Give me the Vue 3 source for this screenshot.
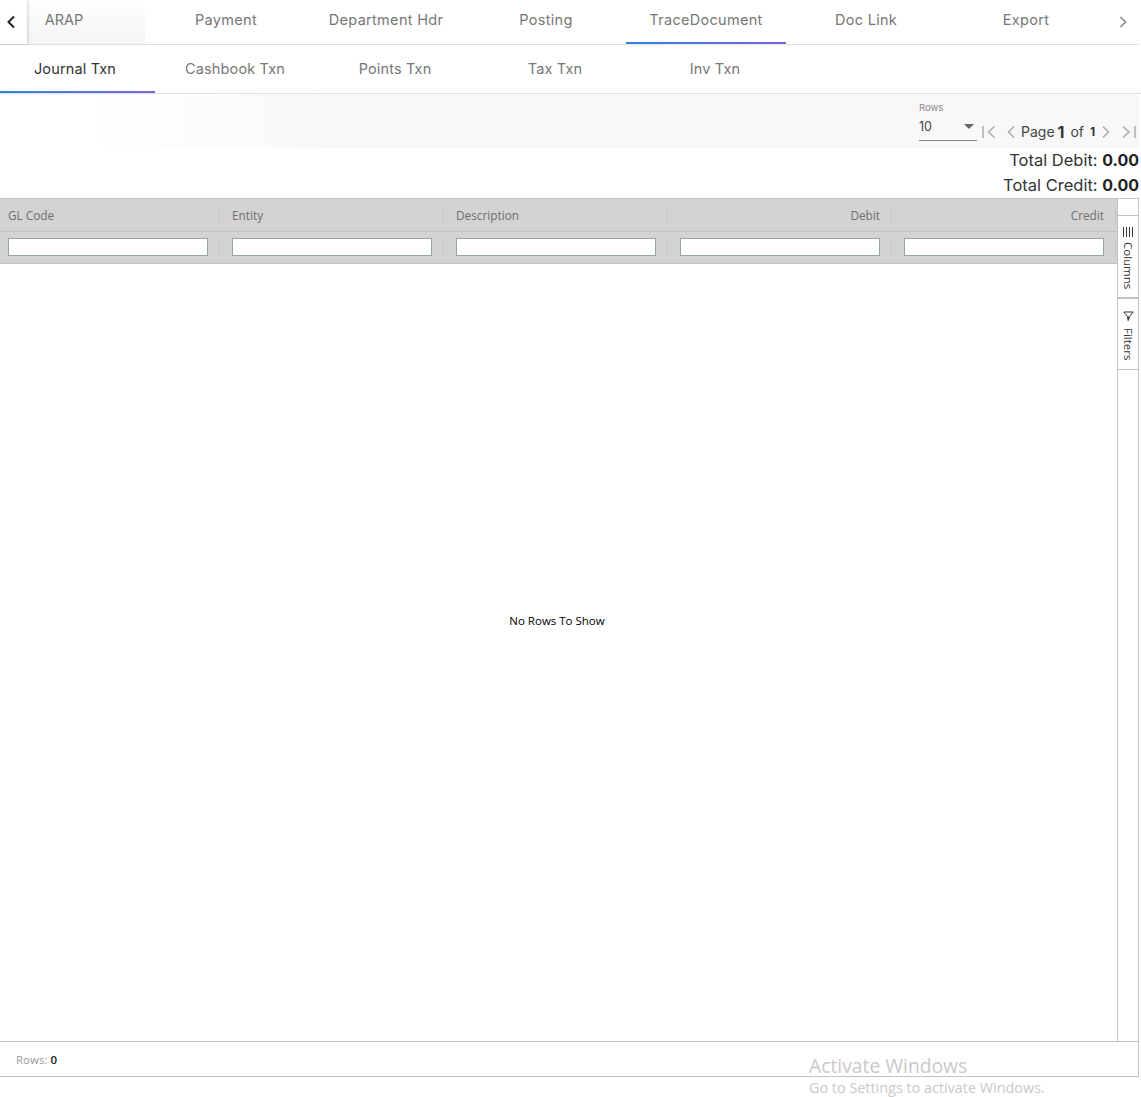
<template>
  <div class="page">
    <div class="top-tabs">
      <button class="arrow arrow-left">
        <svg width="10" height="14" viewBox="0 0 10 14"><path d="M8 1.5 2.500 7 8 12.500" fill="none" stroke="#222" stroke-width="2" /></svg>
      </button>
      <div class="top-scroll">
        <div v-for="t in topTabs" :key="t" class="top-tab" :class="{ active: t == 'TraceDocument', first: t == 'ARAP' }">{{ t }}</div>
      </div>
      <button class="arrow arrow-right">
        <svg width="10" height="14" viewBox="0 0 10 14"><path d="M2.500 2 7.500 7 2.500 12" fill="none" stroke="#888" stroke-width="1.600" /></svg>
      </button>
    </div>

    <div class="sub-tabs">
      <div v-for="t in subTabs" :key="t" class="sub-tab" :class="{ active: t == 'Journal Txn' }">{{ t }}</div>
    </div>

    <div class="toolbar">
      <div class="rows-select">
        <label>Rows</label>
        <div class="select-value">
          <span>10</span>
          <i class="caret"></i>
        </div>
      </div>
      <div class="pager">
        <svg width="16" height="14" viewBox="0 0 16 14"><path d="M2 1v12M13.500 1.500 7.500 7l6 5.500" fill="none" stroke="#aaa" stroke-width="1.500" /></svg>
        <svg class="prev" width="10" height="14" viewBox="0 0 10 14"><path d="M8 1.500 2.500 7 8 12.500" fill="none" stroke="#aaa" stroke-width="1.500" /></svg>
        <span class="page-text">Page</span>
        <b class="page-num">1</b>
        <span class="of">of</span>
        <b class="page-total">1</b>
        <svg class="next" width="10" height="14" viewBox="0 0 10 14"><path d="M2 1.500 7.500 7 2 12.500" fill="none" stroke="#aaa" stroke-width="1.500" /></svg>
        <svg class="last" width="16" height="14" viewBox="0 0 16 14"><path d="M2 1.500 8 7l-6 5.500M14 1v12" fill="none" stroke="#aaa" stroke-width="1.500" /></svg>
      </div>
    </div>

    <div class="totals">
      <div>Total Debit: <b>0.00</b></div>
      <div>Total Credit: <b>0.00</b></div>
    </div>

    <div class="grid">
      <div class="grid-body">
        <div class="grid-main">
          <div class="head-row">
            <div v-for="c in columns" :key="c.name" class="head-cell" :class="{ right: c.right }">{{ c.name }}</div>
          </div>
          <div class="filter-row">
            <div v-for="c in columns" :key="c.name" class="filter-cell">
              <input type="text">
            </div>
          </div>
          <div class="empty">
            <span>No Rows To Show</span>
          </div>
        </div>
        <div class="side">
          <div class="side-top"></div>
          <div class="side-btn columns">
            <svg width="10" height="10" viewBox="0 0 10 10"><path d="M.5 0v10M3.500 0v10M6.500 0v10M9.500 0v10" stroke="#333" stroke-width="1" /></svg>
            <span>Columns</span>
          </div>
          <div class="side-btn filters">
            <svg width="11" height="11" viewBox="0 0 11 11">
              <path d="M.8 1h9.400L6.500 5.500 5.200 9.500 4.500 5.500z" fill="none" stroke="#333" stroke-width="1" />
              <path d="M4.500 5.500h2L5 10z" fill="#333" />
            </svg>
            <span>Filters</span>
          </div>
        </div>
      </div>
      <div class="status">Rows: <b>0</b></div>
    </div>

    <div class="watermark">
      <div class="wm-title">Activate Windows</div>
      <div class="wm-sub">Go to Settings to activate Windows.</div>
    </div>
  </div>
</template>

<script setup>
const topTabs = ['ARAP', 'Payment', 'Department Hdr', 'Posting', 'TraceDocument', 'Doc Link', 'Export']
const subTabs = ['Journal Txn', 'Cashbook Txn', 'Points Txn', 'Tax Txn', 'Inv Txn']
const columns = [
  { name: 'GL Code' },
  { name: 'Entity' },
  { name: 'Description' },
  { name: 'Debit', right: true },
  { name: 'Credit', right: true }
]
</script>

<style scoped>
.page {
  position: relative;
  width: 1141px;
  height: 1097px;
  background: #fff;
  font-family: "Inter", "Open Sans", sans-serif;
  overflow: hidden;
}

.top-tabs {
  display: flex;
  width: 1139px;
  height: 45px;
  border-bottom: 1px solid #e0e0e0;
  box-sizing: border-box;
}

.arrow {
  border: 0;
  background: #fff;
  padding: 0;
  display: flex;
  align-items: center;
  justify-content: center;
  flex: none;
}

.arrow-left {
  width: 27px;
  padding-right: 5px;
  position: relative;
  z-index: 1;
  box-shadow: 1px 0 3px #0000002e;
}

.arrow-right {
  width: 36px;
  padding-left: 4px;
  margin-left: auto;
}

.top-scroll {
  display: flex;
  flex: 1;
  overflow: hidden;
}

.top-tab {
  flex: none;
  width: 160px;
  height: 44px;
  line-height: 40px;
  text-align: center;
  font-size: 14.500px;
  letter-spacing: .3px;
  color: #777;
  box-sizing: border-box;
}

.top-tab.first {
  width: 118px;
  margin-right: 1px;
  padding-right: 44px;
  letter-spacing: 0;
  background: linear-gradient(#fff, #f4f4f7);
}

.top-tab.active {
  border-bottom: 2px solid;
  border-image: linear-gradient(90deg, #2f86d8, #7a63e0) 1;
}

.sub-tabs {
  display: flex;
  height: 49px;
  border-bottom: 1px solid #e0e0e0;
  box-sizing: border-box;
}

.sub-tab {
  width: 160px;
  height: 48px;
  line-height: 48px;
  text-align: center;
  font-size: 14.500px;
  letter-spacing: .15px;
  color: #777;
  box-sizing: border-box;
}

.sub-tab.active {
  width: 155px;
  padding-right: 5px;
  color: #333;
  border-bottom: 2px solid;
  border-image: linear-gradient(90deg, #2f86d8, #7a63e0) 1;
}

.toolbar {
  display: flex;
  justify-content: flex-end;
  align-items: flex-end;
  width: 1139px;
  height: 54px;
  background: linear-gradient(90deg, #fff 8%, #f8f8f8 30%);
  box-sizing: border-box;
}

.rows-select {
  width: 58px;
  margin-bottom: 7px;
}

.rows-select label {
  display: block;
  font-size: 9.500px;
  color: #888;
  line-height: 12px;
  margin-bottom: 6px;
}

.select-value {
  display: flex;
  align-items: center;
  justify-content: space-between;
  height: 21px;
  border-bottom: 1px solid #888;
  font-size: 12.500px;
  color: #444;
  padding-right: 3px;
  padding-bottom: 7px;
  box-sizing: border-box;
}

.caret {
  border-left: 5px solid transparent;
  border-right: 5px solid transparent;
  border-top: 5px solid #666;
}

.pager {
  display: flex;
  align-items: center;
  height: 32px;
  width: 162px;
  padding-left: 4px;
  padding-bottom: 1px;
  box-sizing: border-box;
  font-size: 14px;
  color: #444;
}

.prev {
  margin-left: 9px;
}

.page-text {
  margin-left: 5px;
}

.page-num {
  margin-left: 3px;
  font-size: 16px;
  color: #333;
}

.of {
  margin-left: 6px;
}

.page-total {
  margin-left: 6px;
  color: #333;
  font-size: 12px;
}

.next {
  margin-left: 6px;
}

.last {
  margin-left: 10px;
}

.totals {
  width: 1139px;
  height: 50px;
  text-align: right;
  font-size: 16.500px;
  line-height: 25px;
  color: #333;
}

.totals b {
  color: #222;
  font-size: 16px;
}

.grid {
  width: 1139px;
  height: 879px;
  border-top: 1px solid #bdc3c7;
  border-bottom: 1px solid #bdc3c7;
  border-right: 1px solid #bdc3c7;
  box-sizing: border-box;
  display: flex;
  flex-direction: column;
  font-family: "Open Sans", "Noto Sans", sans-serif;
  font-size: 11.500px;
}

.grid-body {
  flex: 1;
  display: flex;
  min-height: 0;
}

.grid-main {
  flex: 1;
  min-width: 0;
  overflow: hidden;
  display: flex;
  flex-direction: column;
}

.head-row,
.filter-row {
  display: grid;
  grid-template-columns: repeat(5, 224px);
  background: #d3d3d3;
}

.head-row {
  height: 33px;
  flex: none;
  border-bottom: 1px solid #bdc3c7;
  box-sizing: border-box;
  align-items: center;
}

.head-cell {
  width: 220px;
  height: 17px;
  line-height: 17px;
  padding: 0 11px 0 8px;
  font-size: 11.800px;
  font-weight: 500;
  color: #6f6f6f;
  border-right: 1px solid #c4c8ca;
  box-sizing: border-box;
}

.head-cell.right {
  text-align: right;
}

.filter-row {
  height: 32px;
  flex: none;
  border-bottom: 1px solid #bdc3c7;
  box-sizing: border-box;
  align-items: start;
  padding-top: 6px;
}

.filter-cell {
  width: 220px;
  height: 18px;
  padding: 0 11px 0 8px;
  border-right: 1px solid #c4c8ca;
  box-sizing: border-box;
}

.filter-cell input {
  display: block;
  width: 200px;
  height: 18px;
  box-sizing: border-box;
  border: 1px solid #95a5a6;
  background: #fff;
  padding: 0;
  outline: none;
}

.empty {
  flex: 1;
  display: flex;
  align-items: center;
  justify-content: center;
  color: #000;
  padding-bottom: 64px;
  padding-right: 3px;
}

.side {
  width: 21px;
  flex: none;
  box-sizing: border-box;
  border-left: 1px solid #bdc3c7;
  display: flex;
  flex-direction: column;
  font-size: 11.500px;
  color: #333;
}

.side-top {
  height: 17px;
  border-bottom: 1px solid #bdc3c7;
  box-sizing: border-box;
}

.side-btn {
  display: flex;
  flex-direction: column;
  align-items: center;
  box-sizing: border-box;
  padding-top: 11px;
}

.side-btn span {
  writing-mode: vertical-lr;
  margin-top: 5px;
  line-height: 20px;
}

.columns {
  height: 83px;
  border-bottom: 2px solid #bdc3c7;
}

.filters {
  height: 71px;
  padding-top: 12px;
  border-bottom: 1px solid #bdc3c7;
}

.filters span {
  margin-top: 6px;
}

.status {
  height: 35px;
  flex: none;
  border-top: 1px solid #bdc3c7;
  box-sizing: border-box;
  padding-left: 16px;
  line-height: 35px;
  color: #9b9b9b;
}

.status b {
  color: #222;
  font-weight: 600;
}

.watermark {
  position: absolute;
  left: 809px;
  top: 1053px;
  font-family: "Open Sans", "Noto Sans", sans-serif;
  color: #c9c9c9;
  white-space: nowrap;
}

.wm-title {
  font-size: 19.300px;
  line-height: 26px;
}

.wm-sub {
  font-size: 14.400px;
  line-height: 18px;
}
</style>
